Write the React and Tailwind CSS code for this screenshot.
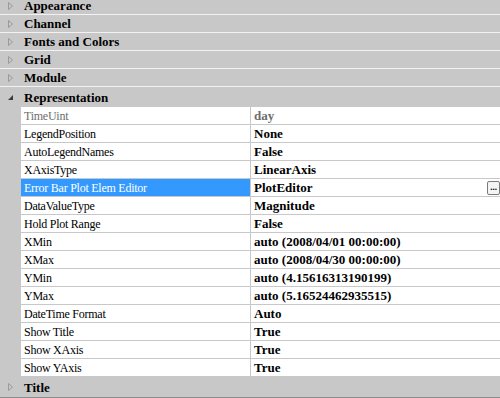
import React from "react";

const before = ["Appearance", "Channel", "Fonts and Colors", "Grid", "Module"];

const props = [
    { name: "TimeUint", value: "day", readOnly: true },
    { name: "LegendPosition", value: "None" },
    { name: "AutoLegendNames", value: "False" },
    { name: "XAxisType", value: "LinearAxis" },
    { name: "Error Bar Plot Elem Editor", value: "PlotEditor", selected: true, button: true },
    { name: "DataValueType", value: "Magnitude" },
    { name: "Hold Plot Range", value: "False" },
    { name: "XMin", value: "auto (2008/04/01 00:00:00)" },
    { name: "XMax", value: "auto (2008/04/30 00:00:00)" },
    { name: "YMin", value: "auto (4.15616313190199)" },
    { name: "YMax", value: "auto (5.16524462935515)" },
    { name: "DateTime Format", value: "Auto" },
    { name: "Show Title", value: "True" },
    { name: "Show XAxis", value: "True" },
    { name: "Show YAxis", value: "True" },
];

function Collapsed() {
    return (
        <svg width="7" height="10" viewBox="0 0 7 10" className="shrink-0">
            <path d="M1.5 1.5 L5.5 5 L1.5 8.5 Z" fill="none" stroke="#9a9a9a" strokeWidth="1" />
        </svg>
    );
}

function Expanded() {
    return (
        <svg width="7" height="10" viewBox="0 0 7 10" className="shrink-0">
            <path d="M6 3 L6 8 L1 8 Z" fill="#3c3c3c" />
        </svg>
    );
}

function Category({ label, last }) {
    return (
        <div className={`flex items-center pl-[7px] ${last ? "h-[21px] border-b border-[#8c8c8c]" : "h-[18px] border-b border-[#f2f2f2]"}`}>
            <Collapsed />
            <span className="ml-[10px] text-[13px] font-bold text-black leading-none">{label}</span>
        </div>
    );
}

export default function App() {
    return (
        <div className="w-[500px] h-[398px] overflow-hidden bg-[#c8c8c8] font-['Liberation_Serif',serif]">
            <div className="-mt-[3px]">
                {before.map((c) => (
                    <Category key={c} label={c} />
                ))}

                {/* Representation */}
                <div className="flex items-center h-[20px] pl-[7px]">
                    <Expanded />
                    <span className="ml-[10px] text-[13px] font-bold text-black leading-none">Representation</span>
                </div>

                <div className="pl-[21px]">
                    {props.map((p) => (
                        <div key={p.name} className="flex h-[18px] bg-white border-b border-[#c8c8c8] leading-none">
                            <div
                                className={`w-[230px] shrink-0 flex items-center pl-[3px] text-[12px] tracking-[-0.25px] border-r border-[#c8c8c8] ${
                                    p.selected ? "bg-[#3399ff] text-white" : p.readOnly ? "text-[#6d6d6d]" : "text-black"
                                }`}
                            >
                                {p.name}
                            </div>
                            <div className={`flex-1 flex items-center pl-[3px] text-[13px] font-bold ${p.readOnly ? "text-[#6d6d6d]" : "text-black"}`}>
                                <span className="flex-1">{p.value}</span>
                                {p.button && (
                                    <span className="w-[13px] h-[14px] rounded-[2px] border border-[#7a7a7a] bg-[#f4f4f4] flex items-end justify-center pb-[2px] text-[9px] leading-none">
                                        ...
                                    </span>
                                )}
                            </div>
                        </div>
                    ))}
                </div>

                <Category label="Title" last />
            </div>
        </div>
    );
}
